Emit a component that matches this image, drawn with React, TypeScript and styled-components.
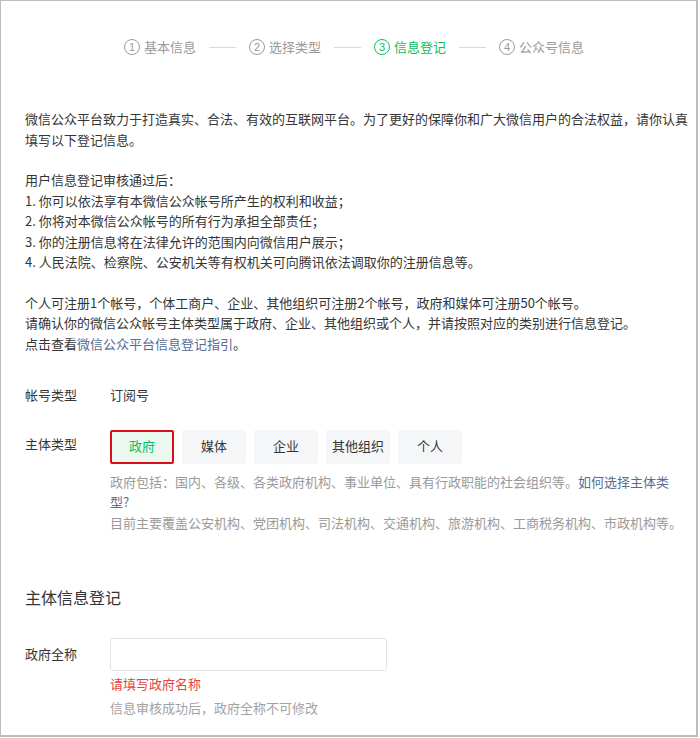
import * as React from "react";
import styled, {createGlobalStyle} from "styled-components";

const GlobalStyle = createGlobalStyle`
  html, body {
    margin: 0;
    padding: 0;
    background: #fff;
  }
  body {
    font-family: "Noto Sans CJK SC", "Noto Sans", sans-serif;
    color: #353535;
  }
`;

const Page = styled.div`
  width: 698px;
  height: 737px;
  box-sizing: border-box;
  border-style: solid;
  border-color: #bdbdbd;
  border-width: 1px 2px 2px 1px;
  padding: 0 4px 0 24px;
  overflow: hidden;
  font-size: 13px;
  line-height: 20.5px;
`;

const Steps = styled.div`
  display: flex;
  align-items: center;
  margin-top: 36px;
  padding-left: 99px;
  height: 20px;
`;

const Step = styled.div<{ $active?: boolean }>`
  display: flex;
  align-items: center;
  gap: 4px;
  font-size: 13px;
  color: ${p => p.$active ? "#07c160" : "#9a9a9a"};
`;

const StepNum = styled.span`
  width: 14px;
  height: 14px;
  border: 1px solid currentColor;
  border-radius: 50%;
  display: flex;
  align-items: center;
  justify-content: center;
  font-family: "Liberation Sans", sans-serif;
  font-size: 11px;
  line-height: 1;
`;

const StepLine = styled.div`
  width: 27px;
  height: 1px;
  background: #d9d9d9;
  margin: 0 13px;
`;

const Para = styled.p<{ $top: number }>`
  margin: ${p => p.$top}px 0 0;
`;

const Link = styled.a`
  color: #576b95;
  text-decoration: none;
`;

const Row = styled.div<{ $top: number }>`
  display: flex;
  margin-top: ${p => p.$top}px;
`;

const Label = styled.div<{ $pad?: number }>`
  width: 85px;
  flex-shrink: 0;
  padding-top: ${p => p.$pad || 0}px;
`;

const Field = styled.div`
  flex: 1;
  min-width: 0;
`;

const TypeList = styled.div`
  display: flex;
  gap: 8px;
`;

const TypeButton = styled.div<{ $selected?: boolean }>`
  width: 64px;
  height: 34px;
  box-sizing: border-box;
  display: flex;
  align-items: center;
  justify-content: center;
  border-radius: 2px;
  background: ${p => p.$selected ? "#eaf8ef" : "#f5f6f7"};
  color: ${p => p.$selected ? "#07c160" : "#353535"};
  border: ${p => p.$selected ? "2px solid #d9101c" : "none"};
`;

const Help = styled.div`
  width: 573px;
  margin-top: 8px;
  color: #9a9a9a;
`;

const Heading = styled.h3`
  margin: 52px 0 0;
  font-size: 16px;
  font-weight: normal;
  line-height: 24px;
`;

const Input = styled.input`
  display: block;
  width: 277px;
  height: 33px;
  box-sizing: border-box;
  border: 1px solid #e4e4e4;
  border-radius: 3px;
  outline: none;
  padding: 0 10px;
  font: inherit;
`;

const ErrorTip = styled.div`
  margin-top: 3px;
  color: #e64340;
  line-height: 20px;
`;

const HintTip = styled.div`
  margin-top: 4px;
  color: #a3a3a3;
  line-height: 20px;
`;

const steps = ["基本信息", "选择类型", "信息登记", "公众号信息"];
const types = ["政府", "媒体", "企业", "其他组织", "个人"];

export default function App() {
    return <>
        <GlobalStyle/>
        <Page>
            <Steps>
                {steps.map((s, i) => <React.Fragment key={s}>
                    {i > 0 && <StepLine/>}
                    <Step $active={i === 2}>
                        <StepNum>{i + 1}</StepNum>
                        {s}
                    </Step>
                </React.Fragment>)}
            </Steps>

            <Para $top={52}>
                微信公众平台致力于打造真实、合法、有效的互联网平台。为了更好的保障你和广大微信用户的合法权益，请你认真填写以下登记信息。
            </Para>
            <Para $top={20}>
                用户信息登记审核通过后：<br/>
                1. 你可以依法享有本微信公众帐号所产生的权利和收益；<br/>
                2. 你将对本微信公众帐号的所有行为承担全部责任；<br/>
                3. 你的注册信息将在法律允许的范围内向微信用户展示；<br/>
                4. 人民法院、检察院、公安机关等有权机关可向腾讯依法调取你的注册信息等。
            </Para>
            <Para $top={20}>
                个人可注册1个帐号，个体工商户、企业、其他组织可注册2个帐号，政府和媒体可注册50个帐号。<br/>
                请确认你的微信公众帐号主体类型属于政府、企业、其他组织或个人，并请按照对应的类别进行信息登记。<br/>
                点击查看<Link href="#">微信公众平台信息登记指引</Link>。
            </Para>

            <Row $top={31}>
                <Label>帐号类型</Label>
                <Field>订阅号</Field>
            </Row>

            <Row $top={24}>
                <Label $pad={4}>主体类型</Label>
                <Field>
                    <TypeList>
                        {types.map((t, i) => <TypeButton key={t} $selected={i === 0}>{t}</TypeButton>)}
                    </TypeList>
                    <Help>
                        政府包括：国内、各级、各类政府机构、事业单位、具有行政职能的社会组织等。<Link href="#">如何选择主体类型?</Link><br/>
                        目前主要覆盖公安机构、党团机构、司法机构、交通机构、旅游机构、工商税务机构、市政机构等。
                    </Help>
                </Field>
            </Row>

            <Heading>主体信息登记</Heading>

            <Row $top={29}>
                <Label $pad={6}>政府全称</Label>
                <Field>
                    <Input/>
                    <ErrorTip>请填写政府名称</ErrorTip>
                    <HintTip>信息审核成功后，政府全称不可修改</HintTip>
                </Field>
            </Row>
        </Page>
    </>;
}
